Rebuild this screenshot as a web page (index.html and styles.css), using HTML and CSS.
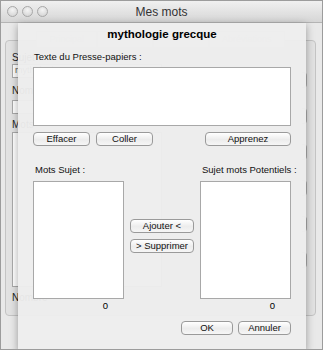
FILE: index.html
```html
<!DOCTYPE html>
<html lang="fr">
  <head>
    <meta charset="UTF-8" />
    <meta name="viewport" content="width=device-width, initial-scale=1.0" />
    <title>Mes mots</title>
    <link rel="stylesheet" href="styles.css">
  </head>
  <body>
    <div class="window">
      <!-- Title bar -->
      <div class="titlebar">
        <div class="lights">
          <span class="light"></span>
          <span class="light"></span>
          <span class="light"></span>
        </div>
        <div class="title">Mes mots</div>
      </div>

      <!-- Main window content, behind the sheet -->
      <div class="main">
        <div class="tabs">
          <span class="tab">Principal</span>
          <span class="tab blank"></span>
          <span class="tab blank"></span>
          <span class="tab">Abréviations</span>
        </div>
        <div class="group">
          <div class="left">
            <label>Sujet</label>
            <div class="field subject">mythologie</div>
            <label>Nom</label>
            <div class="field name"></div>
            <label>Mots</label>
            <div class="field list"></div>
            <label>Nombre</label>
          </div>
          <div class="right">
            <span class="ghost">Importer .txt</span>
          </div>
          <div class="edge">
            <span class="tick"></span>
            <span class="tick"></span>
            <span class="tick"></span>
            <span class="tick"></span>
            <span class="tick"></span>
            <span class="tick"></span>
          </div>
        </div>
      </div>

      <!-- Sheet dialog -->
      <div class="sheet">
        <h1>mythologie grecque</h1>
        <p class="label">Texte du Presse-papiers :</p>
        <div class="textbox"></div>
        <div class="row">
          <button class="btn w57">Effacer</button>
          <button class="btn w57">Coller</button>
          <span class="spacer"></span>
          <button class="btn w86">Apprenez</button>
        </div>

        <div class="lists">
          <div class="col">
            <p class="label">Mots Sujet :</p>
            <div class="listbox"></div>
            <p class="num">0</p>
          </div>
          <div class="mid">
            <button class="btn w63">Ajouter &lt;</button>
            <button class="btn w63">&gt; Supprimer</button>
          </div>
          <div class="col">
            <p class="label">Sujet mots Potentiels :</p>
            <div class="listbox"></div>
            <p class="num">0</p>
          </div>
        </div>

        <div class="footer">
          <button class="btn w52">OK</button>
          <button class="btn w53">Annuler</button>
        </div>
      </div>
    </div>
  </body>
</html>
```

FILE: styles.css
```css
body {
  margin: 0;
  font-family: "Liberation Sans", Arial, sans-serif;
  font-size: 9.5px;
  color: #000;
}
.window {
  position: relative;
  width: 323px;
  height: 350px;
  box-sizing: border-box;
  border: 1px solid #9c9c9c;
  background: #e9e9e9;
  overflow: hidden;
}
.titlebar {
  height: 21px;
  display: flex;
  align-items: center;
  background: linear-gradient(#f0f0f0, #d6d6d6);
  border-bottom: 1px solid #b4b4b4;
  position: relative;
}
.lights {
  display: flex;
  gap: 4px;
  padding-left: 6px;
}
.light {
  width: 9px;
  height: 9px;
  border-radius: 50%;
  border: 1px solid #a8a8a8;
  background: radial-gradient(circle at 50% 35%, #f4f4f4, #cfcfcf);
}
.title {
  position: absolute;
  left: 0;
  right: 0;
  text-align: center;
  font-size: 12px;
  color: #333;
}

/* behind the sheet */
.main {
  padding: 8px 6px 0 4px;
}
.tabs {
  display: flex;
  justify-content: center;
  margin-bottom: -8px;
  position: relative;
}
.tab {
  height: 13px;
  padding: 2px 12px 0;
  border: 1px solid #d8d8d8;
  background: #f0f0f0;
  color: #cfcfcf;
  font-size: 9px;
}
.tab.blank {
  width: 30px;
}
.group {
  display: flex;
  height: 263px;
  border: 1px solid #c4c4c4;
  border-radius: 4px;
  background: #e2e2e2;
  padding: 11px 0 0 6px;
}
.left {
  display: flex;
  flex-direction: column;
  width: 150px;
}
.left label {
  font-size: 10px;
  line-height: 11px;
  color: #222;
}
.field {
  border: 1px solid #aaa;
  background: #fff;
  font-size: 9px;
  padding-left: 2px;
  color: #555;
}
.field.subject {
  height: 12px;
  margin: 1px 0 7px;
}
.field.name {
  height: 12px;
  margin: 4px 0 5px;
}
.field.list {
  height: 153px;
  margin: 2px 0 5px;
}
.right {
  padding-top: 98px;
  margin-left: 50px;
  font-size: 9px;
  color: #dcdcdc;
}
.edge {
  display: flex;
  flex-direction: column;
  gap: 20px;
  margin-left: auto;
  margin-right: 8px;
  padding-top: 20px;
}
.tick {
  width: 4px;
  height: 14px;
  border: 1px solid #aaa;
  border-left: none;
  border-radius: 0 4px 4px 0;
}

/* sheet */
.sheet {
  position: absolute;
  left: 17px;
  top: 22px;
  width: 288px;
  height: 328px;
  box-sizing: border-box;
  padding: 5px 15px 0 15px;
  background: rgba(237, 237, 237, 0.96);
  box-shadow: 0 2px 8px rgba(0, 0, 0, 0.35);
}
.sheet h1 {
  margin: 0 0 11px;
  text-align: center;
  font-size: 11.5px;
  font-weight: bold;
  color: #000;
}
.label {
  margin: 0 0 5px 1px;
  color: #111;
  white-space: nowrap;
}
.textbox {
  height: 57px;
  border: 1px solid #a8a8a8;
  background: #fff;
}
.row {
  display: flex;
  gap: 6px;
  margin-top: 6px;
}
.spacer {
  flex: 1;
}
.btn {
  height: 14px;
  padding: 0;
  border: 1px solid #9a9a9a;
  border-radius: 4px;
  background: linear-gradient(#ffffff, #ececec 55%, #f6f6f6);
  font-family: "Liberation Sans", Arial, sans-serif;
  font-size: 9.5px;
  line-height: 12px;
  color: #111;
}
.w57 { width: 57px; }
.w86 { width: 86px; }
.w63 { width: 64px; }
.w52 { width: 52px; }
.w53 { width: 53px; }

.lists {
  display: flex;
  margin-top: 18px;
}
.col {
  display: flex;
  flex-direction: column;
  width: 91px;
}
.col .label {
  margin: 0 0 6px 2px;
}
.listbox {
  height: 116px;
  border: 1px solid #a8a8a8;
  background: #fff;
}
.num {
  margin: 1px 0 0;
  text-align: right;
  padding-right: 16px;
}
.mid {
  display: flex;
  flex-direction: column;
  gap: 6px;
  padding: 55px 6px 0;
}
.footer {
  display: flex;
  justify-content: flex-end;
  gap: 5px;
  margin-top: 10px;
}
```
